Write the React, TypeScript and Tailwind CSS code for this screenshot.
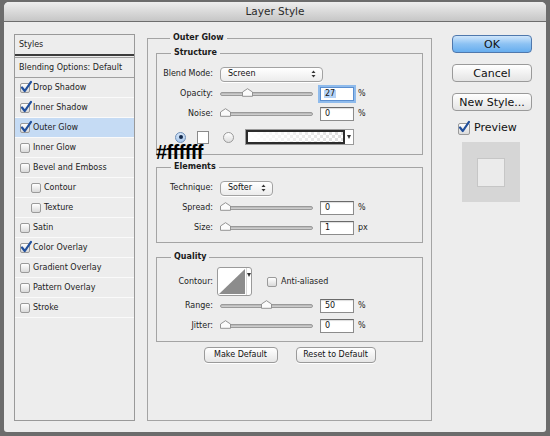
import React from "react";

type Item = { label: string; on?: boolean; sel?: boolean; indent?: boolean };

const items: Item[] = [
    { label: "Drop Shadow", on: true },
    { label: "Inner Shadow", on: true },
    { label: "Outer Glow", on: true, sel: true },
    { label: "Inner Glow" },
    { label: "Bevel and Emboss" },
    { label: "Contour", indent: true },
    { label: "Texture", indent: true },
    { label: "Satin" },
    { label: "Color Overlay", on: true },
    { label: "Gradient Overlay" },
    { label: "Pattern Overlay" },
    { label: "Stroke" },
];

function CheckBox({ on, big }: { on?: boolean; big?: boolean }) {
    return (
        <span
            className={`relative inline-block shrink-0 rounded-[2px] border border-[#9a9a9a] bg-linear-to-b from-white to-[#dadada] ${
                big ? "w-[12px] h-[12px]" : "w-[10px] h-[10px]"
            }`}
        >
            {on && (
                <svg className="absolute -top-[4px] -left-[1px]" width="13" height="14" viewBox="0 0 13 14">
                    <path
                        d="M2 7.5 L4.8 11 L11 1.8"
                        fill="none"
                        stroke="#22509c"
                        strokeWidth="2.2"
                        strokeLinecap="round"
                        strokeLinejoin="round"
                    />
                </svg>
            )}
        </span>
    );
}

function Radio({ on }: { on?: boolean }) {
    return (
        <span
            className={`flex items-center justify-center w-[11px] h-[11px] rounded-full border ${
                on
                    ? "border-[#6f8fb8] bg-linear-to-b from-[#d6e6f8] to-[#a9c8ec]"
                    : "border-[#9a9a9a] bg-linear-to-b from-white to-[#dedede]"
            }`}
        >
            {on && <span className="w-[4px] h-[4px] rounded-full bg-[#13294a]" />}
        </span>
    );
}

function Slider({ value }: { value: number }) {
    return (
        <div className="relative w-[93px] h-[10px] flex items-center">
            <div className="w-full h-[4px] rounded-full border border-[#9a9a9a] bg-linear-to-b from-[#b4b4b4] to-[#d4d4d4]" />
            <svg
                className="absolute top-[-1px]"
                style={{ left: `${(value / 100) * 82}px` }}
                width="11"
                height="9"
                viewBox="0 0 11 9"
            >
                <path d="M0.5 4 L5.5 0.7 L10.5 4 L10.5 8.3 L0.5 8.3 Z" fill="#fbfbfb" stroke="#8a8a8a" strokeWidth="0.9" />
            </svg>
        </div>
    );
}

function NumInput({ value, focus }: { value: string; focus?: boolean }) {
    return (
        <div
            className={`w-[34px] h-[14px] bg-white flex items-center pl-[3px] text-[8px] leading-none text-[#111] ${
                focus
                    ? "border border-[#5b8fd0] shadow-[0_0_0_2px_#8fbbec]"
                    : "border border-[#8c8c8c] border-t-[#6a6a6a] shadow-[inset_0_1px_1px_#ddd]"
            }`}
        >
            {focus ? <span className="bg-[#b5d3f7] px-[1px]">{value}</span> : <span className="px-[1px]">{value}</span>}
        </div>
    );
}

function UpDown() {
    return (
        <svg width="5" height="8" viewBox="0 0 5 8">
            <path d="M0.5 3 L2.5 0.5 L4.5 3 Z" fill="#333" />
            <path d="M0.5 5 L2.5 7.5 L4.5 5 Z" fill="#333" />
        </svg>
    );
}

function Select({ value, w }: { value: string; w: string }) {
    return (
        <div
            className={`${w} h-[15px] rounded-[4px] border border-[#a2a2a2] bg-linear-to-b from-white to-[#ececec] flex items-center justify-between pl-[7px] pr-[6px] text-[8px] text-[#111] shadow-[0_1px_0_#fff]`}
        >
            <span>{value}</span>
            <UpDown />
        </div>
    );
}

function Label({ children }: { children: React.ReactNode }) {
    return <div className="w-[56px] shrink-0 text-right text-[8px] text-[#222] mr-[7px]">{children}</div>;
}

function SliderRow({ label, value, text, unit, focus }: { label: string; value: number; text: string; unit: string; focus?: boolean }) {
    return (
        <div className="h-[20px] flex items-center">
            <Label>{label}</Label>
            <Slider value={value} />
            <div className="ml-[7px]">
                <NumInput value={text} focus={focus} />
            </div>
            <span className="ml-[4px] text-[8px] text-[#222]">{unit}</span>
        </div>
    );
}

function Group({ title, className, children }: { title: string; className?: string; children: React.ReactNode }) {
    return (
        <fieldset className={`border border-[#a4a4a4] ${className ?? ""}`}>
            <legend className="ml-[14px] px-[3px] text-[8px] leading-[10px] font-bold text-[#1a1a1a]">{title}</legend>
            {children}
        </fieldset>
    );
}

function SmallButton({ children, w }: { children: React.ReactNode; w: string }) {
    return (
        <button
            className={`${w} h-[16px] rounded-[4px] border border-[#9a9a9a] bg-linear-to-b from-white to-[#e6e6e6] text-[8px] text-[#111] flex items-center justify-center shadow-[0_1px_0_#fff]`}
        >
            {children}
        </button>
    );
}

function BigButton({ children, primary }: { children: React.ReactNode; primary?: boolean }) {
    return (
        <button
            className={`w-[80px] h-[18px] rounded-[4px] border text-[11px] leading-none text-[#111] flex items-center justify-center ${
                primary
                    ? "border-[#4f78ad] bg-linear-to-b from-[#cfe6fb] via-[#8cc2f3] to-[#66adee]"
                    : "border-[#9a9a9a] bg-linear-to-b from-white to-[#e4e4e4]"
            }`}
        >
            {children}
        </button>
    );
}

function ContourBox() {
    return (
        <div className="w-[35px] h-[29px] rounded-[3px] border border-[#9a9a9a] bg-white flex overflow-hidden">
            <svg width="28" height="27" viewBox="0 0 28 27">
                <path d="M1 26 L27 1 L27 26 Z" fill="#8c8c8c" />
            </svg>
            <div className="flex-1 flex justify-center pt-[5px] border-l border-[#d8d8d8]">
                <svg width="4" height="5" viewBox="0 0 4 5">
                    <path d="M0 0 L4 0 L2 4 Z" fill="#333" />
                </svg>
            </div>
        </div>
    );
}

export default function App() {
    return (
        <div className="w-[550px] h-[436px] bg-[#6c6c6c] pt-[2px] px-[4px] font-['DejaVu_Sans',sans-serif] select-none">
            <div className="h-[430px] bg-[#ededed] rounded-t-[5px] rounded-b-[3px] flex flex-col overflow-hidden">
                {/* Title bar */}
                <div className="h-[20px] shrink-0 flex items-center justify-center bg-linear-to-b from-[#eeeeee] to-[#c6c6c6] border-b border-[#6e6e6e] text-[10.5px] text-[#2a2a2a]">
                    Layer Style
                </div>

                <div className="flex items-start pt-[12px] pl-[10px]">
                    {/* Styles list */}
                    <div className="w-[121px] h-[387px] shrink-0 border border-[#999]">
                        <div className="h-[21px] flex items-center pl-[4px] text-[8px] text-[#222] border-b-2 border-[#3c3c3c]">
                            Styles
                        </div>
                        <div className="mt-[1px] h-[21px] flex items-center pl-[4px] text-[8px] text-[#222] border-t border-b border-[#a0a0a0]">
                            Blending Options: Default
                        </div>
                        {items.map(it => (
                            <div
                                key={it.label}
                                className={`h-[20px] flex items-center gap-[3px] border-b border-[#fafafa] text-[8px] text-[#222] ${
                                    it.indent ? "pl-[16px]" : "pl-[5px]"
                                } ${it.sel ? "bg-[#c5dbf4]" : ""}`}
                            >
                                <CheckBox on={it.on} />
                                <span>{it.label}</span>
                            </div>
                        ))}
                    </div>

                    {/* Outer Glow */}
                    <Group title="Outer Glow" className="relative ml-[12px] mt-[-1px] w-[285px] h-[388px] px-[8px]">
                        <Group title="Structure" className="mt-[5px] pt-[6px] pb-[4px]">
                            <div className="h-[20px] flex items-center">
                                <Label>Blend Mode:</Label>
                                <Select value="Screen" w="w-[103px]" />
                            </div>
                            <SliderRow label="Opacity:" value={27} text="27" unit="%" focus />
                            <SliderRow label="Noise:" value={0} text="0" unit="%" />
                            <div className="h-[26px] flex items-center">
                                <div className="ml-[18px]">
                                    <Radio on />
                                </div>
                                <div className="ml-[11px] w-[12px] h-[13px] border border-[#8a8a8a] bg-white" />
                                <div className="ml-[14px]">
                                    <Radio />
                                </div>
                                <div className="ml-[11px] h-[16px] flex border border-[#9a9a9a]">
                                    <div className="w-[99px] h-full border-2 border-[#2c2c2c] bg-[linear-gradient(to_right,#fff,rgba(255,255,255,0)),conic-gradient(#dedede_25%,#fff_0_50%,#dedede_0_75%,#fff_0)] bg-[length:100%_100%,6px_6px]" />
                                    <div className="w-[8px] bg-white flex items-center justify-center">
                                        <svg width="4" height="5" viewBox="0 0 4 5">
                                            <path d="M0 0 L4 0 L2 4 Z" fill="#333" />
                                        </svg>
                                    </div>
                                </div>
                            </div>
                        </Group>

                        <Group title="Elements" className="mt-[7px] pt-[6px] pb-[4px]">
                            <div className="h-[20px] flex items-center">
                                <Label>Technique:</Label>
                                <Select value="Softer" w="w-[53px]" />
                            </div>
                            <SliderRow label="Spread:" value={0} text="0" unit="%" />
                            <SliderRow label="Size:" value={0} text="1" unit="px" />
                        </Group>

                        <Group title="Quality" className="mt-[9px] pt-[5px] pb-[5px]">
                            <div className="h-[29px] flex items-center">
                                <Label>Contour:</Label>
                                <div className="-ml-[3px]">
                                    <ContourBox />
                                </div>
                                <div className="ml-[15px] flex items-center gap-[4px] text-[8px] text-[#222]">
                                    <CheckBox />
                                    <span>Anti-aliased</span>
                                </div>
                            </div>
                            <SliderRow label="Range:" value={50} text="50" unit="%" />
                            <SliderRow label="Jitter:" value={0} text="0" unit="%" />
                        </Group>

                        <div className="mt-[5px] flex justify-center gap-[18px]">
                            <SmallButton w="w-[74px]">Make Default</SmallButton>
                            <SmallButton w="w-[80px]">Reset to Default</SmallButton>
                        </div>

                        {/* color annotation over the panel */}
                        <div className="absolute left-[8px] top-[102px] text-[20px] leading-[14px] font-bold tracking-[-0.6px] text-black font-['Liberation_Sans',sans-serif]">
                            #ffffff
                        </div>
                    </Group>

                    {/* Right buttons */}
                    <div className="ml-[20px] mt-[1px] w-[80px] flex flex-col">
                        <BigButton primary>OK</BigButton>
                        <div className="mt-[11px]">
                            <BigButton>Cancel</BigButton>
                        </div>
                        <div className="mt-[11px]">
                            <BigButton>New Style...</BigButton>
                        </div>
                        <div className="mt-[11px] ml-[6px] h-[13px] flex items-center gap-[4px] text-[11px] text-[#111]">
                            <CheckBox on big />
                            <span>Preview</span>
                        </div>
                        <div className="mt-[7px] ml-[10px] w-[58px] h-[60px] bg-[#d6d6d6] flex items-center justify-center">
                            <div className="w-[28px] h-[29px] bg-[#ebebeb] border border-[#c6c6c6]" />
                        </div>
                    </div>
                </div>
            </div>
        </div>
    );
}
